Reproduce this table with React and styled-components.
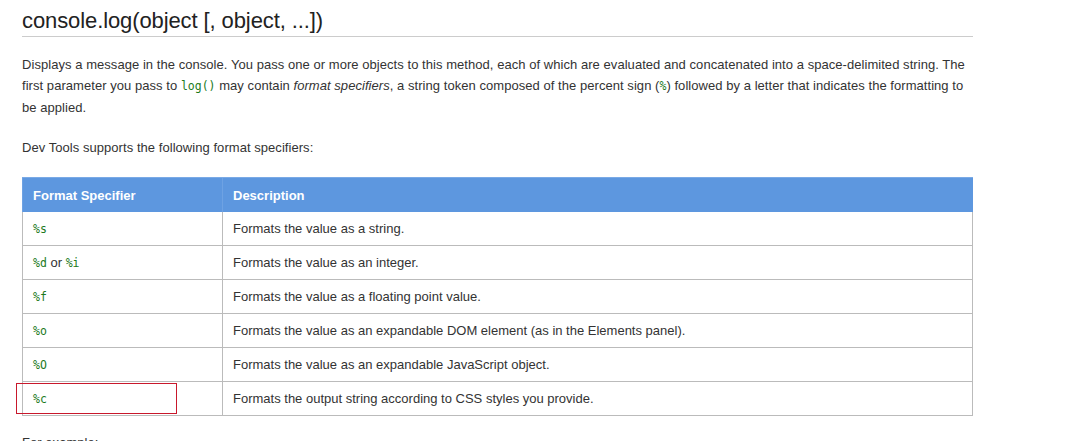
import styled, { createGlobalStyle } from 'styled-components';

const GlobalStyle = createGlobalStyle`
	body {
		margin: 0;
		background: #fff;
		font-family: "Liberation Sans", Arial, sans-serif;
		color: #222;
	}
`;

const Page = styled.div`
	width: 951px;
	padding-left: 22px;
`;

const Title = styled.h1`
	margin: 8px 0 0;
	padding-bottom: 2px;
	font-size: 22px;
	line-height: 26px;
	font-weight: normal;
	letter-spacing: -0.1px;
	color: #222;
	border-bottom: 1px solid #ccc;
`;

const Text = styled.p`
	margin: ${({ $top }) => $top || 0}px 0 0;
	font-size: 13px;
	line-height: 21px;
	letter-spacing: 0.05px;
	color: #333;
`;

const Code = styled.code`
	font-family: "DejaVu Sans Mono", "Liberation Mono", monospace;
	font-size: 11.5px;
	letter-spacing: 0;
	color: #1c7a1c;
`;

const Table = styled.table`
	margin-top: 19px;
	width: 100%;
	border-collapse: collapse;
	font-size: 13px;
`;

const HeadCell = styled.th`
	height: 34px;
	padding: 0 10px;
	text-align: left;
	background: #5d97df;
	color: #fff;
	font-weight: bold;
	border-top: 1px solid #7aaae6;
	border-left: 1px solid #6ea2e3;
	width: ${({ $width }) => $width || 'auto'};
`;

const Cell = styled.td`
	position: relative;
	height: 33px;
	padding: 0 10px;
	border: 1px solid #bbb;
	border-top: none;
	color: #333;
	vertical-align: middle;
`;

const Highlight = styled.span`
	position: absolute;
	left: -7px;
	top: 1px;
	width: 159px;
	height: 29px;
	border: 1px solid #c8182c;
	pointer-events: none;
`;

const rows = [
	[['%s'], 'Formats the value as a string.'],
	[['%d', ' or ', '%i'], 'Formats the value as an integer.'],
	[['%f'], 'Formats the value as a floating point value.'],
	[['%o'], 'Formats the value as an expandable DOM element (as in the Elements panel).'],
	[['%O'], 'Formats the value as an expandable JavaScript object.'],
	[['%c'], 'Formats the output string according to CSS styles you provide.', true],
];

const Specifier = ({ parts }) =>
	parts.map((part, i) => (i % 2 === 0 ? <Code key={i}>{part}</Code> : <span key={i}>{part}</span>));

export default function App() {
	return (
		<Page>
			<GlobalStyle />
			<Title>console.log(object [, object, ...])</Title>
			<Text $top={17}>
				Displays a message in the console. You pass one or more objects to this method, each of which are
				evaluated and concatenated into a space-delimited string. The first parameter you pass to{' '}
				<Code>log()</Code> may contain <em>format specifiers</em>, a string token composed of the percent sign (
				<Code>%</Code>) followed by a letter that indicates the formatting to be applied.
			</Text>
			<Text $top={19}>Dev Tools supports the following format specifiers:</Text>
			<Table>
				<thead>
					<tr>
						<HeadCell $width="179px">Format Specifier</HeadCell>
						<HeadCell>Description</HeadCell>
					</tr>
				</thead>
				<tbody>
					{rows.map(([spec, desc, marked], i) => (
						<tr key={i}>
							<Cell>
								<Specifier parts={spec} />
								{marked && <Highlight />}
							</Cell>
							<Cell>{desc}</Cell>
						</tr>
					))}
				</tbody>
			</Table>
			<Text $top={16}>For example:</Text>
		</Page>
	);
}
